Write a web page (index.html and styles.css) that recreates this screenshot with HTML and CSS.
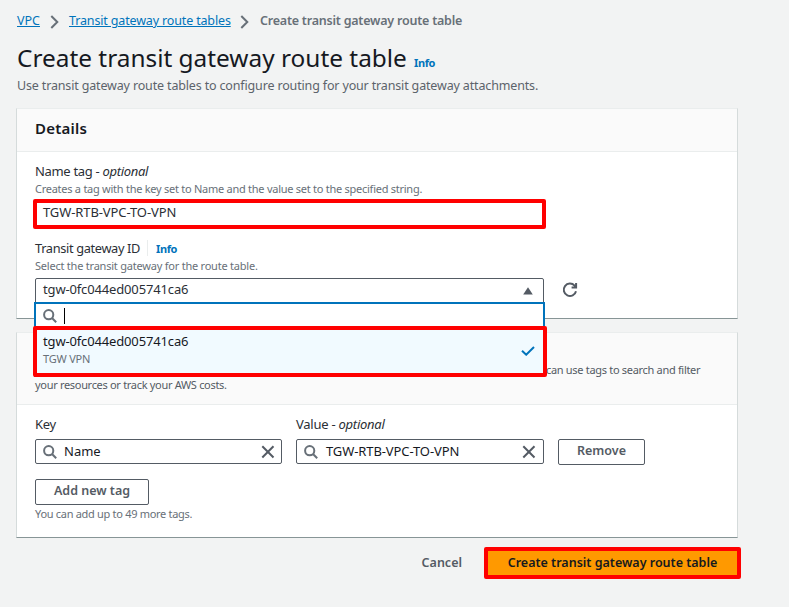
FILE: index.html
```html
<!DOCTYPE html>
<html lang="en">
<head>
<meta charset="utf-8">
<title>Create transit gateway route table</title>
<link rel="stylesheet" href="styles.css">
</head>
<body>
<svg width="0" height="0" class="defs" aria-hidden="true">
  <symbol id="search" viewBox="0 0 14 14"><circle cx="5.7" cy="5.7" r="4.6"/><path d="M9 9l4.2 4.2"/></symbol>
  <symbol id="close" viewBox="0 0 14 14"><path d="M1.3 1.3l11.2 11.2M12.5 1.3L1.3 12.5"/></symbol>
  <symbol id="chevron" viewBox="0 0 9 14"><path d="M1.3 1l6 6-6 6"/></symbol>
</svg>
<main class="page">
  <nav class="crumbs">
    <a class="crumb-vpc" href="#">VPC</a>
    <svg class="chevron"><use href="#chevron"/></svg>
    <a class="crumb-tables" href="#">Transit gateway route tables</a>
    <svg class="chevron"><use href="#chevron"/></svg>
    <span class="current">Create transit gateway route table</span>
  </nav>
  <header class="title">
    <h1>Create transit gateway route table</h1>
    <a class="info" href="#">Info</a>
  </header>
  <p class="description">Use transit gateway route tables to configure routing for your transit gateway attachments.</p>

  <section class="card details">
    <div class="card-head"><h2>Details</h2></div>
    <div class="card-body">
      <div class="label">Name tag - <i>optional</i></div>
      <div class="hint">Creates a tag with the key set to Name and the value set to the specified string.</div>
      <div class="name-input marked"><span class="t-value">TGW-RTB-VPC-TO-VPN</span></div>
      <div class="label label-id"><span class="t-id">Transit gateway ID</span><a class="info" href="#">Info</a></div>
      <div class="hint h-select">Select the transit gateway for the route table.</div>
      <div class="select-row">
        <div class="select">
          <span class="t-tgw">tgw-0fc044ed005741ca6</span>
          <svg class="caret" viewBox="0 0 10 8"><path d="M5 .2L9.8 7.6H.2z"/></svg>
          <div class="dropdown">
            <div class="filter"><svg class="search"><use href="#search"/></svg><span class="cursor"></span></div>
            <div class="option marked">
              <div class="option-text"><div class="t-tgw">tgw-0fc044ed005741ca6</div><div class="option-name">TGW VPN</div></div>
              <svg class="check" viewBox="0 0 14 10"><path d="M1 4.7l4.2 4L13 1"/></svg>
            </div>
          </div>
        </div>
        <svg class="refresh" viewBox="0 0 16 16"><path d="M14 9.2A6.2 6.2 0 1 1 12.6 3.7L14 5.2M14.1 1v4.6H9.6"/></svg>
      </div>
    </div>
  </section>

  <section class="card tags">
    <div class="card-head">
      <p class="tag-text"><span class="rest">can use tags to search and filter</span><br>your resources or track your AWS costs.</p>
    </div>
    <div class="card-body">
      <div class="tag-grid">
        <div class="label">Key</div>
        <div class="label">Value - <i>optional</i></div>
        <div></div>
        <div class="field key-field"><svg class="search"><use href="#search"/></svg><span>Name</span><svg class="close"><use href="#close"/></svg></div>
        <div class="field value-field"><svg class="search"><use href="#search"/></svg><span class="t-value">TGW-RTB-VPC-TO-VPN</span><svg class="close"><use href="#close"/></svg></div>
        <button class="button remove">Remove</button>
      </div>
      <button class="button add">Add new tag</button>
      <div class="hint h-more">You can add up to 49 more tags.</div>
    </div>
  </section>

  <footer class="actions">
    <a class="cancel" href="#">Cancel</a>
    <button class="create marked">Create transit gateway route table</button>
  </footer>
</main>
</body>
</html>
```
FILE: styles.css
```css
* { box-sizing: border-box; }
body {
  margin: 0;
  background: #f2f3f3;
  color: #16191f;
  font: 13px/20px "Noto Sans", "Open Sans", sans-serif;
}
h1, h2, p { margin: 0; }
a { color: #0073bb; }
svg { flex: none; fill: none; stroke: #545b64; stroke-width: 2; }
.defs { position: absolute; }
.page { width: 738px; padding: 11px 0 0 17px; white-space: nowrap; }

.crumbs { display: flex; align-items: center; height: 20px; font-size: 12.5px; color: #687078; }
.crumb-vpc { width: 23px; }
.crumb-tables { width: 162px; letter-spacing: -.15px; }
.current { font-weight: 600; letter-spacing: -.22px; }
.chevron { width: 9px; height: 14px; margin: 2px 10px 0 10px; stroke: #687078; }
.crumb-tables + .chevron { margin-left: 9px; margin-right: 11px; }

.title { display: flex; align-items: baseline; height: 36px; margin-top: 9px; }
h1 { width: 390px; font-size: 24.4px; line-height: 36px; font-weight: 400; }
.info { font-size: 11px; font-weight: 700; letter-spacing: -.4px; text-decoration: none; }
.title .info { margin-left: 7px; }
.description { height: 20px; color: #5c636b; font-size: 12.5px; letter-spacing: -.155px; }

.card {
  width: 722px;
  margin-left: -1px;
  background: #fff;
  border: 1px solid #d5dbdb;
  border-top-color: #eaeded;
  border-bottom-color: #879596;
}
.details { height: 211px; margin-top: 12px; }
.tags { height: 206px; margin-top: 13px; }
.card-head { padding: 0 18px; background: #fafafa; border-bottom: 1px solid #eaeded; }
.card-body { padding: 0 18px; }
.details .card-head { height: 43px; padding-top: 9px; }
.tags .card-head { height: 72px; padding-top: 29px; }
h2 { font-size: 15px; line-height: 20px; font-weight: 600; letter-spacing: .25px; }
.details .card-body { padding-top: 9px; }
.label { height: 20px; letter-spacing: -.25px; color: #2b2f36; }
.details .label { letter-spacing: -.32px; }
.details .label-id { display: flex; margin-top: 9px; }
.t-id { font-size: 12.8px; letter-spacing: -.35px; }
.t-value { letter-spacing: -.1px; }
.t-tgw { letter-spacing: -.15px; }
.label-id .info { margin-left: 7px; padding-left: 8px; height: 16px; line-height: 18px; margin-top: 2px; border-left: 1px solid #eaeded; letter-spacing: -.4px; }
.hint { height: 16px; font-size: 11px; line-height: 16px; letter-spacing: -.26px; color: #687078; }
.h-select { letter-spacing: -.22px; }
.marked { border: 4px solid #f00; border-radius: 2px; }
.name-input { width: 513px; height: 30px; margin: 2px 0 0 -2px; padding-left: 6px; line-height: 19px; color: #2b2f36; }
.select-row { display: flex; align-items: center; margin-top: 4px; gap: 18px; }
.select {
  position: relative;
  display: flex;
  align-items: center;
  justify-content: space-between;
  width: 509px;
  height: 26px;
  padding: 0 10px 4px 7px;
  border: 1px solid #545b64;
  border-radius: 2px;
}
.select > .t-tgw { color: #2b2f36; }
.caret { width: 10px; height: 8px; margin-top: 3px; fill: #545b64; stroke: none; }
.refresh { width: 16px; height: 16px; margin-bottom: 2px; }
.dropdown {
  position: absolute;
  z-index: 2;
  top: 23px;
  left: -2px;
  width: 511px;
  border: 2px solid #0073bb;
  border-bottom: 0;
  background: #fff;
}
.filter { display: flex; align-items: center; height: 22px; padding: 3px 0 0 7px; }
.search { width: 14px; height: 14px; stroke: #687078; }
.filter .search { margin-top: -1px; }
.cursor { width: 1px; height: 16px; margin: -1px 0 0 7px; background: #000; }
.option {
  display: flex;
  align-items: center;
  justify-content: space-between;
  width: 514px;
  height: 51px;
  margin-left: -3px;
  padding: 0 8px 0 6px;
  background: #f1faff;
}
.option-text { margin-top: -6px; }
.option-name { font-size: 11px; line-height: 15px; letter-spacing: -.2px; color: #687078; }
.check { width: 14px; height: 10px; margin-top: -2px; stroke: #0073bb; }

.tag-text { font-size: 11px; line-height: 15px; letter-spacing: -.31px; color: #545b64; }
.rest { margin-left: 511px; }
.tags .card-body { padding-top: 9px; }
.tag-grid { display: grid; grid-template-columns: 247px 248px 87px; column-gap: 14px; }
.tag-grid .label { height: 25px; }
.field {
  display: flex;
  align-items: center;
  height: 25px;
  padding: 0 7px;
  border: 1px solid #545b64;
  border-radius: 2px;
}
.field span { margin-left: 8px; line-height: 20px; margin-top: -1px; }
.key-field { padding-right: 6px; }
.key-field span { margin-left: 7px; }
.field .search { margin-top: 1px; }
.close { width: 14px; height: 14px; margin: 1px 0 0 auto; }
.button {
  height: 26px;
  padding: 0 0 2px;
  border: 1px solid #545b64;
  border-radius: 2px;
  background: #fff;
  color: #545b64;
  font: 600 12.5px/20px "Noto Sans", "Open Sans", sans-serif;
}
.add { display: block; width: 114px; margin-top: 14px; }
.h-more { margin-top: 1px; letter-spacing: -.3px; }

.actions { display: flex; align-items: center; justify-content: flex-end; margin: 9px -3px 0 0; }
.cancel { margin-right: 22px; color: #545b64; font-weight: 600; font-size: 12.5px; text-decoration: none; }
.create {
  width: 257px;
  height: 32px;
  padding: 0 0 1px;
  background: #f90;
  color: #16191f;
  font: 600 12.5px/20px "Noto Sans", "Open Sans", sans-serif;
}
```
